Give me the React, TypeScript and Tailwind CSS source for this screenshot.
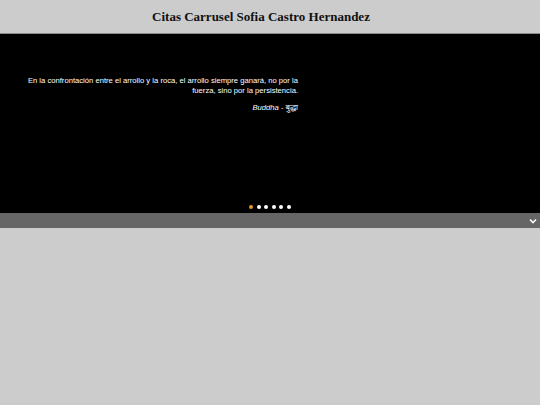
import React from "react";

export default function App() {
  const dots = [0, 1, 2, 3, 4, 5];
  return (
    <div className="w-[540px] h-[405px] bg-[#cccccc] flex flex-col">
      <div className="h-[34px] bg-[#cccccc] border-b border-[#8a8a8a] flex items-center justify-center pr-[18px] pb-[1px]">
        <h1 className="text-[13px] font-bold text-[#111] leading-none" style={{ fontFamily: '"Liberation Serif", serif' }}>
          Citas Carrusel Sofia Castro Hernandez
        </h1>
      </div>
      <div className="h-[179px] bg-black flex flex-col" style={{ fontFamily: '"Liberation Sans", "Noto Sans", sans-serif' }}>
        <div className="ml-[23px] w-[275px] pt-[42px] text-right text-white text-[7.65px] leading-[10px]">
          <p>En la confrontación entre el arrollo y la roca, el arrollo siempre ganará, no por la fuerza, sino por la persistencia.</p>
          <p className="italic mt-[7px]">Buddha - बुद्धा</p>
        </div>
        <div className="mt-auto mb-[4px] flex justify-center gap-[3.6px] pl-[0px]">
          {dots.map((d) => (
            <span
              key={d}
              className={d === 0 ? "w-[4px] h-[4px] rounded-full bg-[#e39b1f]" : "w-[4px] h-[4px] rounded-full bg-white"}
            />
          ))}
        </div>
      </div>
      <div className="h-[15px] bg-[#666666] flex items-center justify-end pr-[3px]">
        <svg width="8" height="6" viewBox="0 0 8 6">
          <path d="M1 1.5 L4 4.5 L7 1.5" stroke="white" strokeWidth="1.6" fill="none" />
        </svg>
      </div>
    </div>
  );
}
